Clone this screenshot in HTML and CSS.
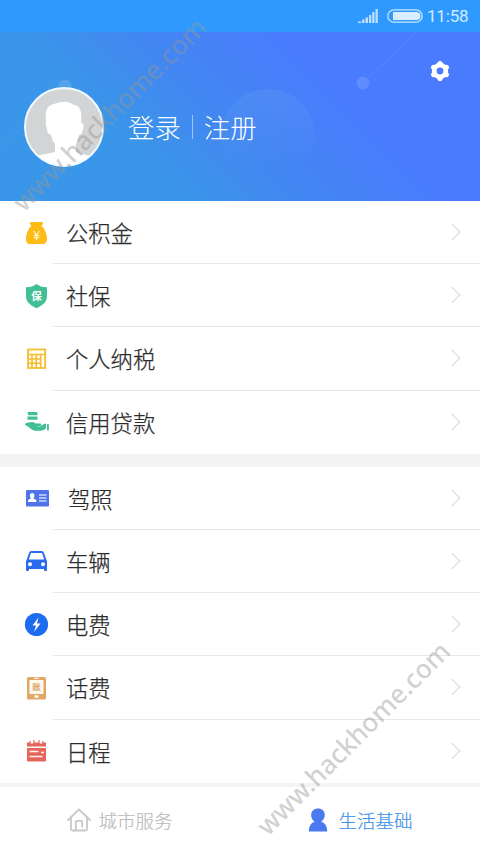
FILE: index.html
```html
<!DOCTYPE html>
<html lang="zh-CN">
<head>
<meta charset="utf-8">
<title>生活基础</title>
<link rel="stylesheet" href="styles.css">
</head>
<body>
<div class="app">
  <div class="status">
    <svg class="signal" width="20" height="14" viewBox="0 0 20 14"><path d="M0 14v-1.500h3V14zM4 14v-3.500h2.500V14zM7.500 14V8.500H10V14zM11 14V6h2.300v8zM14.300 14V3h2.200v11zM17.500 14V0h2.300v14z"/></svg>
    <svg class="battery" width="36" height="14" viewBox="0 0 36 14"><rect x=".8" y=".8" width="34.400" height="12.400" rx="6.200" fill="none" stroke="#c8e6ff" stroke-width="1.300"/><path d="M6 3h23.500a4 4 0 0 1 0 8H6z" fill="#d8edff"/></svg>
    <span class="time">11:58</span>
  </div>
  <header class="profile">
    <svg class="decor" width="480" height="169" viewBox="0 0 480 169"><circle cx="268" cy="104" r="47" fill="url(#bubble)"/><circle cx="363" cy="51" r="6.500" fill="#fff" fill-opacity=".13"/><path d="M368 46 417 0M0 115l28-23" stroke="#fff" stroke-opacity=".05" stroke-width="1.500"/><circle cx="65" cy="54" r="6.500" fill="#fff" fill-opacity=".13"/><defs><linearGradient id="bubble" x1="0" y1="0" x2="0" y2="1"><stop stop-color="#7fc0f0" stop-opacity=".14"/><stop offset=".85" stop-color="#7fc0f0" stop-opacity="0"/></linearGradient></defs></svg>
    <svg class="avatar" width="80" height="80" viewBox="0 0 80 80"><circle cx="40" cy="40" r="38.800" fill="#d3d4d5"/><path d="M22 36c-1-10 0-18 8-19 8-3 14-3 20 1 7 0 8 8 7 18 3 0 3 3 2 7-1 4-3 5-4 5-1 5-2 7-3 9v8c4 2 9 2.500 14 4A39 39 0 0 1 14 68.500c5-1 11-2 17-3.500V57c-2-2-3-5-4-9-3-1-4-3-4-6-1-4-2-6-1-6z" fill="#fff"/><circle cx="40" cy="40" r="39" fill="none" stroke="#f1faff" stroke-width="2"/></svg>
    <div class="account"><span>登录</span><i class="bar"></i><span>注册</span></div>
    <svg class="gear" width="22" height="22" viewBox="0 0 22 22"><path d="M11 2v18M3.200 6.500l15.600 9M18.800 6.500l-15.600 9" stroke="#fff" stroke-width="6.200" stroke-linecap="round" transform="translate(1.980 1.980) scale(.82)"/><circle cx="11" cy="11" r="8.200" fill="#fff"/><circle cx="11" cy="11" r="3.400" fill="#4a7bfe"/></svg>
  </header>

  <main>
    <section class="group">
      <div class="row"><span class="icon"><svg width="24" height="26" viewBox="0 0 24 26"><path fill="#fdbb16" d="M7 2h11c1.500.3 1.500 2 .5 2.800l-1 1C21 9 23 15 23 19c0 3.500-2 5-4 5H6c-3 0-4-2-4-5 0-4 2-10 5.500-13.200l-1-1C5.500 4 5.500 2.300 7 2z"/><path d="m9.800 11 2.700 4 2.700-4M12.500 14v6M9.800 15.300h5.400M9.800 17.500h5.400" fill="none" stroke="#fff2c8" stroke-width="1.300"/></svg></span><div class="label">公积金<i class="arrow"></i></div></div>
      <div class="row"><span class="icon"><svg width="24" height="26" viewBox="0 0 24 26"><path fill="#43bf95" d="M12.500 1c2.500 2 6 3.300 10.500 3.300v9.200c0 6-5 9-10.500 11.800C7 22.500 2 19.500 2 13.500V4.300C6.500 4.300 10 3 12.500 1z"/><text class="shield-text" x="12.500" y="16.500">保</text></svg></span><div class="label">社保<i class="arrow"></i></div></div>
      <div class="row"><span class="icon"><svg width="24" height="26" viewBox="0 0 24 26"><rect x="4" y="3.500" width="17.200" height="18.500" fill="#fffdf0" stroke="#f5bd32" stroke-width="1.800"/><path d="M4 8.500h17M4 13h13M4 17.300h13M8 8v14M12.200 8v14M16.700 8v14" stroke="#f5bd32" stroke-width="1.600"/></svg></span><div class="label">个人纳税<i class="arrow"></i></div></div>
      <div class="row"><span class="icon"><svg width="26" height="26" viewBox="0 0 26 26"><path fill="#43bf95" d="M3.500 3h9.500l.7 3.300H4.200zM3.500 7.500h10v3.300h-10zM1 14.700c3-.8 6-2.300 9-1.300l2 1.200h4.500c1.300.4 1 2 0 2.300H12l4 .6 4.500-2.700c1.500-.5 2.200.2 1.500 1.300v3l-2 1.900c-5 1.200-9 1.200-12-.3-2-1.500-5-4.200-7-5zM23 15.200h1.900v6H23z"/></svg></span><div class="label">信用贷款<i class="arrow"></i></div></div>
    </section>
    <section class="group">
      <div class="row"><span class="icon"><svg width="26" height="26" viewBox="0 0 26 26"><rect x="2" y="5" width="23" height="16.500" rx="1" fill="#5074e8"/><path fill="#fff" d="M4 17v-1.500c.5-1.300 2-1.500 3-2-1.500-2-1.500-5.500 1.200-5.500s2.700 3.500 1.200 5.500c1 .5 2.500.7 3 2V17z"/><path d="M15 10h7.500M15 13h7.500M15 16h7.500" stroke="#cbd7ff" stroke-width="1.400"/></svg></span><div class="label"><span class="inset">驾照</span><i class="arrow"></i></div></div>
      <div class="row"><span class="icon"><svg width="24" height="26" viewBox="0 0 24 26"><path fill="#2a6bed" fill-rule="evenodd" d="M7.500 2h10c1.500 0 2 .7 2.500 2l3 8.500V21c0 1.600-3 1.600-3 0v-1H5v1c0 1.600-3 1.600-3 0v-8.500L5 4c.5-1.300 1-2 2.500-2zM7 4 4.800 10.500h15.400L18 4zM6 13.200a2 2 0 1 0 0 4 2 2 0 0 0 0-4zm13 0a2 2 0 1 0 0 4 2 2 0 0 0 0-4z"/></svg></span><div class="label">车辆<i class="arrow"></i></div></div>
      <div class="row"><span class="icon"><svg width="25" height="26" viewBox="0 0 25 26"><circle cx="12.500" cy="12.500" r="11.600" fill="#1e6cee"/><path fill="#fff" d="m14.500 5.500-6 8H12l-2 6.500 6.500-8.500H13z"/></svg></span><div class="label">电费<i class="arrow"></i></div></div>
      <div class="row"><span class="icon"><svg width="24" height="26" viewBox="0 0 24 26"><rect x="3" y="2" width="19" height="22.500" rx="1.500" fill="#e1a766"/><path fill="#fff8ec" d="M5.500 5h14v14h-14zM10.500 20.300h4v2.500h-4zM10 2.700h5v1h-5z"/><text class="bill-text" x="12.500" y="15.300">账</text></svg></span><div class="label">话费<i class="arrow"></i></div></div>
      <div class="row"><span class="icon"><svg width="24" height="26" viewBox="0 0 24 26"><path fill="#e6655b" d="M3 4.500h2.500V3h1.200v2.500h2.600V2h1.200v2.500h4V2h1.200v3.500h2.600V3h1.200v1.500H22v4H3zM3 10h19v12c0 1-.5 1.500-1.500 1.500h-16C3.500 23.500 3 23 3 22z"/><path d="M5.500 13.500h9M5.500 18.500h13M17 14.500h3" stroke="#fff4f0" stroke-width="1.500"/></svg></span><div class="label">日程<i class="arrow"></i></div></div>
    </section>
  </main>

  <nav class="tabs">
    <div class="tab"><svg width="26" height="26" viewBox="0 0 26 26"><path d="M1.500 13.500 13 2.500l11.500 11M5 11v11c0 1 .4 1.500 1.500 1.500h13c1 0 1.500-.5 1.500-1.500V11M9.800 23.500V15c0-.8.400-1.200 1.200-1.200h4c.8 0 1.200.4 1.200 1.200v5.500" fill="none" stroke="#c8c8c8" stroke-width="1.800" stroke-linejoin="round"/></svg><span>城市服务</span></div>
    <div class="tab active"><svg width="20" height="26" viewBox="0 0 20 26"><path fill="#4a79f0" d="M.8 24.500c0-5 2-8.500 6-9.700C1.500 11.500 1.700 1.500 10 1.500s8.500 10 3.200 13.300c4 1.200 6 4.700 6 9.700z"/></svg><span>生活基础</span></div>
  </nav>

  <svg class="watermark" width="480" height="853" viewBox="0 0 480 853"><text transform="translate(24 213) rotate(-45)" textLength="260" lengthAdjust="spacingAndGlyphs">www.hackhome.com</text><text transform="translate(268 837) rotate(-45)" textLength="260" lengthAdjust="spacingAndGlyphs">www.hackhome.com</text></svg>
</div>
</body>
</html>
```

FILE: styles.css
```css
* { box-sizing: border-box; }
body {
  margin: 0;
  background: #fff;
  font-family: "Noto Sans CJK SC", sans-serif;
  font-weight: 300;
}
svg { display: block; flex: none; }
.app {
  position: relative;
  width: 480px;
  height: 853px;
  overflow: hidden;
  display: flex;
  flex-direction: column;
}
.status {
  height: 32px;
  background: #2e9aff;
  display: flex;
  align-items: center;
  justify-content: flex-end;
  padding-right: 12px;
  color: #d3eaff;
}
.signal { fill: #bfe1ff; margin-right: 9px; }
.battery { margin-right: 4px; }
.time {
  width: 41px;
  font: 400 17px/32px Roboto, sans-serif;
  letter-spacing: -.2px;
  white-space: nowrap;
}
.profile {
  position: relative;
  height: 169px;
  display: flex;
  align-items: center;
  padding: 20px 28px 0 24px;
  background: linear-gradient(45deg, #3a96e8 28%, #4386f2 48%, #4a7bfe 70%);
  color: #fff;
}
.decor { position: absolute; left: 0; top: 0; }
.avatar { position: relative; }
.account {
  position: relative;
  display: flex;
  align-items: center;
  margin-left: 24px;
  font-size: 26.4px;
  line-height: 40px;
}
.bar {
  width: 1px;
  height: 24px;
  margin: 0 11px;
  background: #9cc5f8;
}
.gear {
  position: relative;
  align-self: flex-start;
  margin: 8px 1px 0 auto;
}
main { background: #f4f4f4; padding-bottom: 4px; }
.group { background: #fff; }
.group + .group { margin-top: 13px; }
.row { display: flex; height: 63.2px; }
.icon {
  width: 53px;
  padding-left: 24px;
  display: flex;
  align-items: center;
}
.label {
  flex: 1;
  display: flex;
  align-items: center;
  padding: 0 22px 0 13px;
  border-bottom: 1px solid #e8e8e8;
  color: #2c2c2c;
  font-size: 22.3px;
  -webkit-text-stroke: .25px;
}
.row:last-child .label { border-bottom-color: transparent; }
.inset { padding-left: 2px; }
.arrow {
  width: 12px;
  height: 12px;
  margin-left: auto;
  border: solid #d8d8d8;
  border-width: 1.5px 1.5px 0 0;
  transform: rotate(45deg);
}
.tabs {
  flex: 1;
  display: flex;
  background: #fff;
}
.tab {
  flex: 1;
  display: flex;
  align-items: center;
  justify-content: center;
  gap: 6px;
  padding-right: 2px;
  color: #bcbcbc;
  font-size: 18.5px;
  -webkit-text-stroke: .2px;
}
.tab.active {
  gap: 10px;
  padding-right: 0;
  color: #3d92e8;
}
.shield-text {
  font-size: 10.5px;
  font-weight: 700;
  fill: #fff;
  text-anchor: middle;
}
.bill-text {
  font-size: 8.5px;
  font-weight: 700;
  fill: #dca569;
  text-anchor: middle;
}
.watermark {
  position: absolute;
  left: 0;
  top: 0;
  pointer-events: none;
  font: 500 26.5px "Noto Sans", sans-serif;
  fill: #969696;
  fill-opacity: .44;
}
```
